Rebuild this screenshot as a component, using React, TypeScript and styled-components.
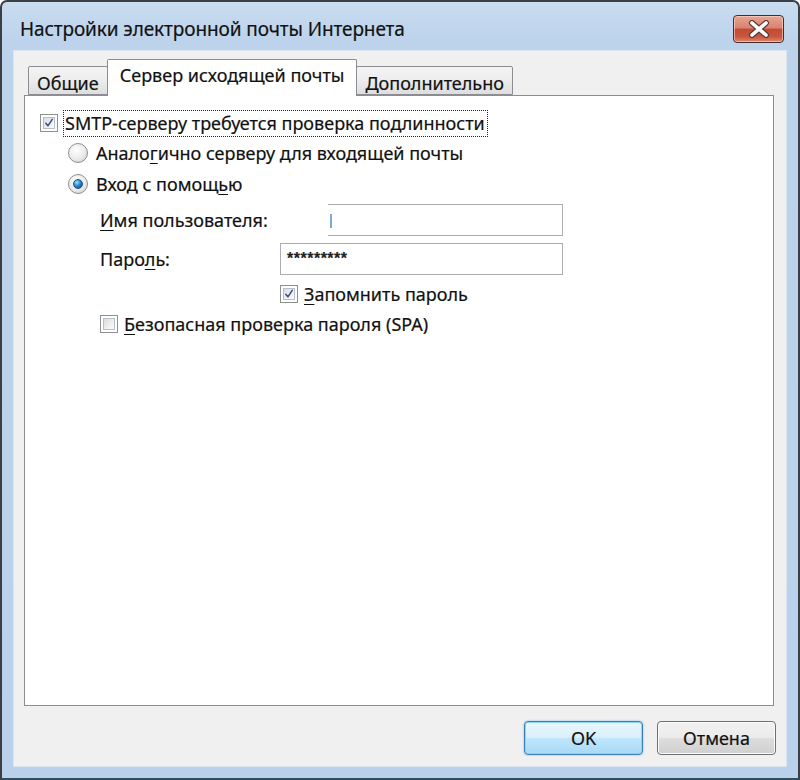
import React from "react";
import styled, { createGlobalStyle } from "styled-components";

const Global = createGlobalStyle`
  html, body { margin: 0; padding: 0; background: #ffffff; }
  body { font-family: "Noto Sans", "Open Sans", sans-serif; -webkit-text-stroke: 0.2px currentColor; }
  * { box-sizing: border-box; }
`;

const Window = styled.div`
  width: 800px;
  height: 780px;
  display: flex;
  flex-direction: column;
  border: 2px solid #3b3f44;
  border-bottom-color: #2e4f60;
  border-radius: 7px 7px 0 0;
  background: linear-gradient(180deg, #c9dcf0 0px, #bcd3eb 40px, #b9d1ea 100%);
  padding: 0 11px 11px 11px;
  overflow: hidden;
`;

const TitleBar = styled.div`
  height: 48px;
  display: flex;
  align-items: center;
  justify-content: space-between;
  padding: 6px 3px 0 7px;
`;

const Title = styled.div`
  font-size: 19px;
  color: #111;
  letter-spacing: -0.1px;
`;

const CloseButton = styled.div`
  width: 51px;
  height: 28px;
  margin-top: 0px;
  border: 1px solid #4a2a28;
  border-radius: 4px;
  background: linear-gradient(180deg, #e8a493 0%, #d98371 45%, #c24a33 52%, #c9573d 80%, #dc8a6c 100%);
  box-shadow: inset 0 0 0 1px rgba(255, 220, 210, 0.6);
  display: flex;
  align-items: center;
  justify-content: center;
`;

const Client = styled.div`
  flex: 1;
  background: #f0f0f0;
  border: 1px solid #dbe5f0;
  display: flex;
  flex-direction: column;
  padding: 9px 12px 11px 10px;
`;

const TabStrip = styled.div`
  height: 35px;
  display: flex;
  align-items: flex-end;
  padding-left: 4px;
  position: relative;
  z-index: 2;
`;

const Tab = styled.div<{ $active?: boolean }>`
  height: ${(p) => (p.$active ? "37px" : "29px")};
  margin-bottom: ${(p) => (p.$active ? "-1px" : "0")};
  margin-left: ${(p) => (p.$active ? "-1px" : "0")};
  margin-right: ${(p) => (p.$active ? "-1px" : "0")};
  position: relative;
  z-index: ${(p) => (p.$active ? 2 : 1)};
  border: 1px solid #8b8d93;
  border-bottom: ${(p) => (p.$active ? "none" : "1px solid #8b8d93")};
  border-radius: 2px 2px 0 0;
  background: ${(p) =>
    p.$active ? "#ffffff" : "linear-gradient(180deg, #f4f4f4 0%, #ececec 50%, #dedede 100%)"};
  padding: ${(p) => (p.$active ? "3px 12px 0 12px" : "4px 8px 0 8px")};
  font-size: 18px;
  color: #111;
  display: flex;
  align-items: ${(p) => (p.$active ? "flex-start" : "center")};
  white-space: nowrap;
`;

const Panel = styled.div`
  flex: 1;
  background: #ffffff;
  border: 1px solid #8b8d93;
  padding: 13px 15px;
  display: flex;
  flex-direction: column;
  font-size: 18px;
  color: #111;
`;

const Row = styled.div<{ $indent?: number; $height?: number }>`
  display: flex;
  align-items: center;
  height: ${(p) => p.$height ?? 30}px;
  padding-left: ${(p) => p.$indent ?? 0}px;
  gap: 6px;
  white-space: nowrap;
`;

const FocusLabel = styled.span`
  outline: 1px dotted #222;
  padding: 0 2px 1px 1px;
  line-height: 24px;
`;

const Box = styled.span`
  width: 18px;
  height: 18px;
  flex: none;
  border: 1px solid #8e8f8f;
  background: #ffffff;
  display: flex;
  align-items: center;
  justify-content: center;
  padding: 2px;
`;

const BoxInner = styled.span`
  width: 100%;
  height: 100%;
  border: 1px solid #b5bfc9;
  background: linear-gradient(135deg, #d9dde2 0%, #f0f0f0 60%, #fbfbfb 100%);
  display: flex;
  align-items: center;
  justify-content: center;
`;

const Radio = styled.span`
  width: 20px;
  height: 20px;
  flex: none;
  border-radius: 50%;
  border: 1px solid #8e8f8f;
  background: radial-gradient(circle at 40% 35%, #ffffff 0%, #eaeaea 55%, #c9c9c9 100%);
  display: flex;
  align-items: center;
  justify-content: center;
  margin-right: 2px;
`;

const RadioDot = styled.span`
  width: 10px;
  height: 10px;
  border-radius: 50%;
  background: radial-gradient(circle at 35% 30%, #9fe0ff 0%, #2b8ad0 45%, #123f73 100%);
  border: 1px solid #1f4e86;
`;

const Form = styled.div`
  display: grid;
  grid-template-columns: 180px 283px;
  row-gap: 7px;
  align-items: center;
  margin-left: 60px;
  margin-top: 5px;
`;

const FieldLabel = styled.span`
  font-size: 18px;
`;

const Input = styled.div<{ $hideLeft?: boolean }>`
  position: relative;
  height: 32px;
  border: 1px solid #abadb3;
  background: #fff;
  display: flex;
  align-items: center;
  padding-left: 6px;
  font-size: 16px;
  letter-spacing: 0.5px;
  font-family: "Liberation Sans", sans-serif;
  font-weight: bold;
  color: #222;
  &::before {
    content: "";
    display: ${(p) => (p.$hideLeft ? "block" : "none")};
    position: absolute;
    left: -1px;
    top: -1px;
    bottom: -1px;
    width: 48px;
    background: #ffffff;
  }
`;

const Caret = styled.span`
  display: inline-block;
  width: 2px;
  height: 14px;
  background: #7ea9d0;
  margin-left: 43px;
  margin-top: 2px;
`;

const U = styled.span`
  text-decoration: underline;
  text-underline-offset: 3px;
`;

const Footer = styled.div`
  display: flex;
  justify-content: flex-end;
  gap: 14px;
  margin-top: 15px;
  margin-right: -2px;
`;

const Button = styled.div<{ $default?: boolean }>`
  width: 119px;
  height: 34px;
  border-radius: 4px;
  border: 1px solid ${(p) => (p.$default ? "#3c7fb1" : "#707070")};
  background: ${(p) =>
    p.$default
      ? "linear-gradient(180deg, #eaf6fd 0%, #d9f0fc 48%, #bee6fd 52%, #a7d9f5 100%)"
      : "linear-gradient(180deg, #f2f2f2 0%, #ebebeb 48%, #dddddd 52%, #cfcfcf 100%)"};
  box-shadow: ${(p) =>
    p.$default ? "inset 0 0 0 1px #8fd3f5, 0 0 2px #6ab4e0" : "inset 0 0 0 1px #fbfbfb"};
  display: flex;
  align-items: center;
  justify-content: center;
  font-size: 18px;
  color: #111;
`;

const Check = () => (
  <svg width="14" height="14" viewBox="0 0 14 14">
    <path d="M2.5 7.5 L5.5 11 L11.5 2" fill="none" stroke="#3f4f8f" strokeWidth="2.2" strokeLinecap="round" strokeLinejoin="round" />
  </svg>
);

const Checkbox = ({ checked }: { checked?: boolean }) => (
  <Box>
    <BoxInner>{checked ? <Check /> : null}</BoxInner>
  </Box>
);

const CloseX = () => (
  <svg width="24" height="18" viewBox="0 0 24 18">
    <path d="M5 3 L19 15 M19 3 L5 15" stroke="#5a3a36" strokeWidth="6" strokeLinecap="round" />
    <path d="M5 3 L19 15 M19 3 L5 15" stroke="#ffffff" strokeWidth="3.6" strokeLinecap="round" />
  </svg>
);

export default function App() {
  return (
    <>
      <Global />
      <Window>
        <TitleBar>
          <Title>Настройки электронной почты Интернета</Title>
          <CloseButton>
            <CloseX />
          </CloseButton>
        </TitleBar>
        <Client>
          <TabStrip>
            <Tab>Общие</Tab>
            <Tab $active>Сервер исходящей почты</Tab>
            <Tab>Дополнительно</Tab>
          </TabStrip>
          <Panel>
            <Row $height={28}>
              <Checkbox checked />
              <FocusLabel>SMTP-серверу требуется проверка подлинности</FocusLabel>
            </Row>
            <Row $indent={28} $height={32}>
              <Radio />
              <span>
                Анало<U>г</U>ично серверу для входящей почты
              </span>
            </Row>
            <Row $indent={28} $height={30}>
              <Radio>
                <RadioDot />
              </Radio>
              <span>
                Вход с помощ<U>ь</U>ю
              </span>
            </Row>
            <Form>
              <FieldLabel>
                <U>И</U>мя пользователя:
              </FieldLabel>
              <Input $hideLeft>
                <Caret />
              </Input>
              <FieldLabel>
                Паро<U>л</U>ь:
              </FieldLabel>
              <Input>*********</Input>
              <span />
              <Row $height={24}>
                <Checkbox checked />
                <span>
                  <U>З</U>апомнить пароль
                </span>
              </Row>
            </Form>
            <Row $indent={60} $height={36}>
              <Checkbox />
              <span>
                <U>Б</U>езопасная проверка пароля (SPA)
              </span>
            </Row>
          </Panel>
          <Footer>
            <Button $default>OK</Button>
            <Button>Отмена</Button>
          </Footer>
        </Client>
      </Window>
    </>
  );
}
